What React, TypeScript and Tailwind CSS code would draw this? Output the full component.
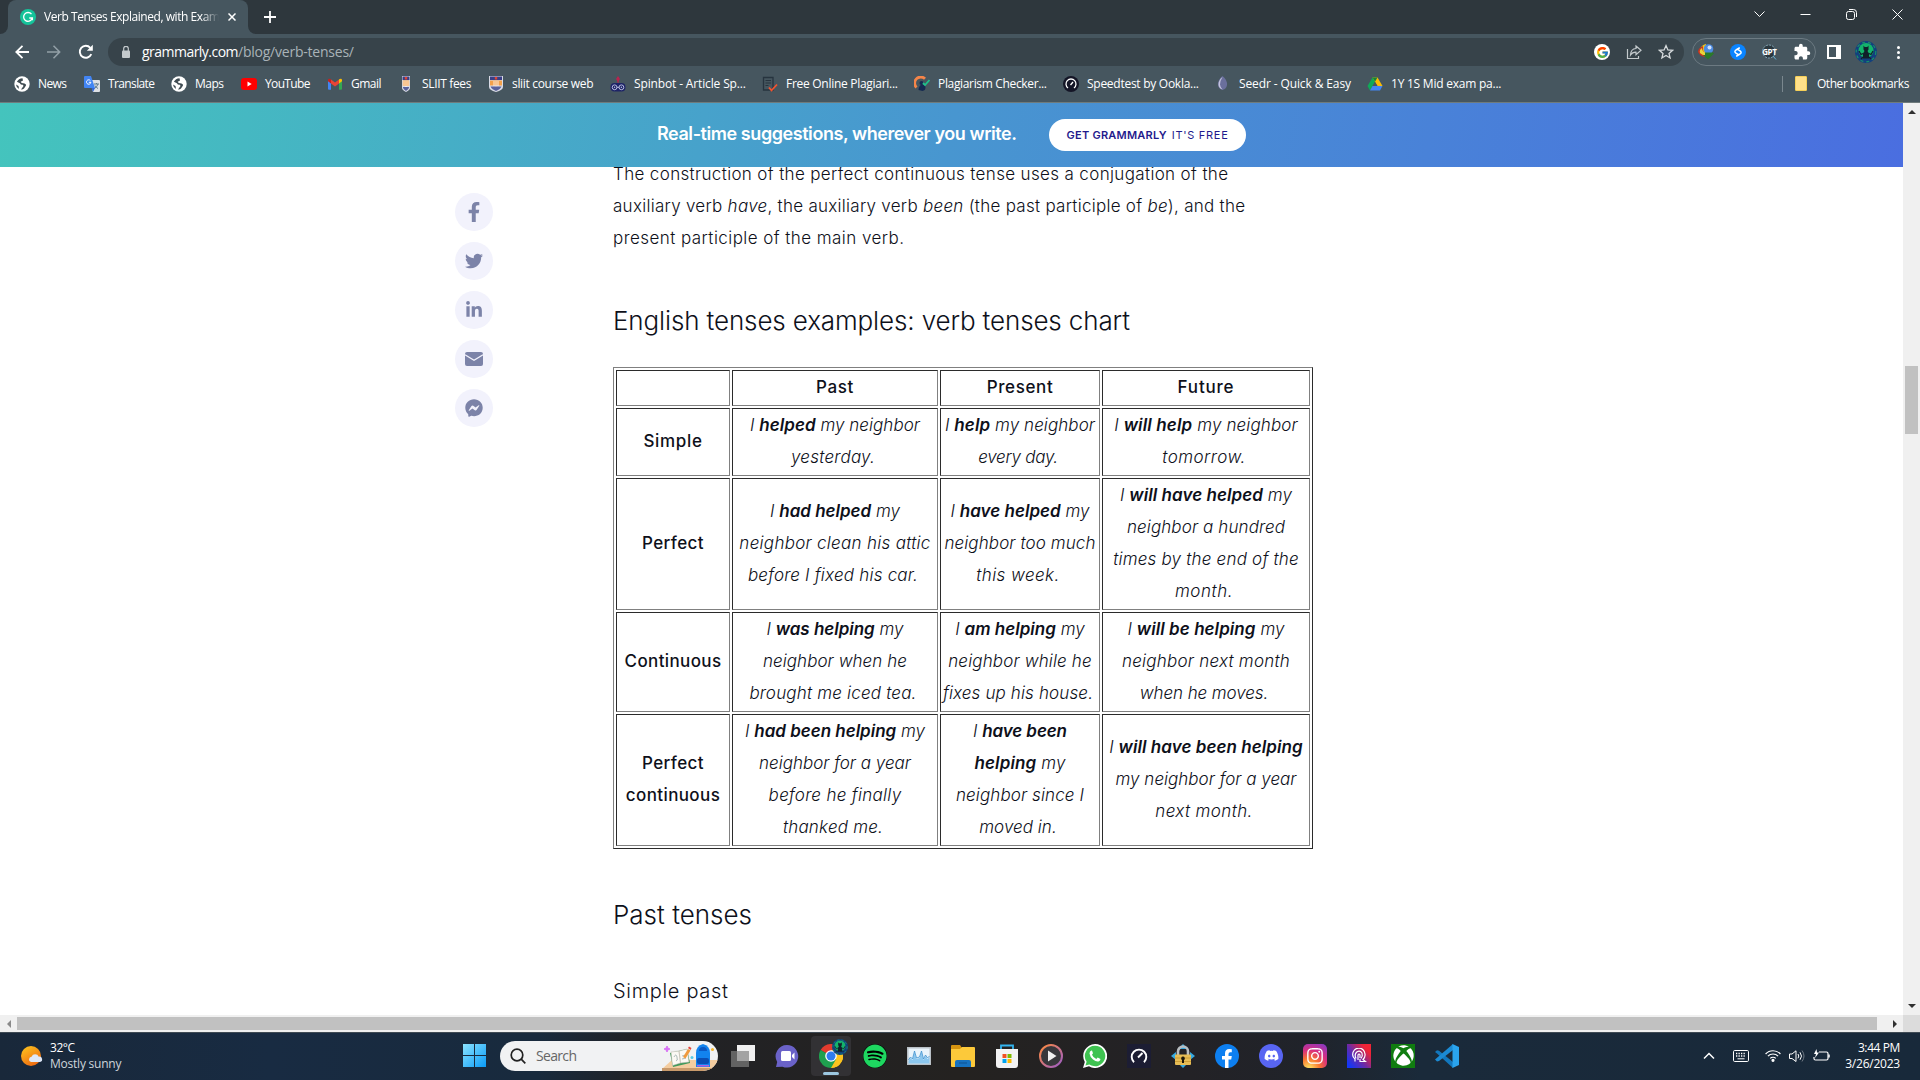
import React, { useLayoutEffect, useRef } from "react";
import { FaFacebookF, FaTwitter, FaLinkedinIn, FaFacebookMessenger, FaSpotify, FaDiscord, FaInstagram, FaXbox } from "react-icons/fa";
import { FcGoogle } from "react-icons/fc";
import { MdExtension } from "react-icons/md";

/** Single line of text, tracked so that it spans `w` pixels. */
function Fit({ w, className = "", children }: { w: number; className?: string; children: React.ReactNode }) {
  const ref = useRef<HTMLSpanElement>(null);
  useLayoutEffect(() => {
    const el = ref.current;
    if (!el) return;
    el.style.letterSpacing = "0px";
    const n = (el.textContent || "").length;
    const natural = el.getBoundingClientRect().width;
    if (n > 1) {
      const s = (w - natural) / (n - 1);
      el.style.letterSpacing = s.toFixed(3) + "px";
    }
  }, [w]);
  return <span ref={ref} className={"inline-block whitespace-pre " + className}>{children}</span>;
}

const ui = "font-['Open_Sans','Noto_Sans',sans-serif]";

/* ---------- small icons ---------- */

const Shield = ({ wide = false }: { wide?: boolean }) => (
  <svg width="16" height="16" viewBox="0 0 16 16">
    <path d={wide ? "M1 0h14v11q0 3-7 5q-7-2-7-5z" : "M4 0h8v12q0 2-4 4q-4-2-4-4z"} fill="#d9dbe6" />
    <path d={wide ? "M2 .5h12v3.500H2z" : "M4.500 .5h7v3.500h-7z"} fill="#3a3f86" />
    <path d="M6.800 1h2.400v2.500H6.800z" fill="#e0442f" />
    <path d={wide ? "M2 4.500h12v5H2z" : "M4.800 4.500h6.400v5.500H4.800z"} fill="#f3a14b" />
    <path d="M6 5v5M8 5v6M10 5v5" stroke="#fff" strokeWidth=".8" />
    <path d={wide ? "M2.500 10.500h11q-1 2.600-5.500 4.400q-4.500-1.800-5.500-4.400z" : "M4.800 11h6.400q-.3 2.500-3.200 4q-2.900-1.500-3.200-4z"} fill="#5a629b" />
  </svg>
);

const Globe = () => (
  <svg width="16" height="16" viewBox="0 0 16 16">
    <circle cx="8" cy="8" r="7.700" fill="#fff" />
    <path d="M8.500 2.200q-4 .3-5.600 3.600l3 1.400q1 2 3 1.500l.6 1.300-2.500 3.500q2 .2 3-1l2-3q.3-1.700-1.500-2l-2.800-.4-1-1.300 2.300-1.200z" fill="#3f4b52" />
    <path d="M2 8.500l2.500 1.500.5 3Q2.500 12 2 8.500z" fill="#3f4b52" />
  </svg>
);

const Translate = () => (
  <svg width="16" height="16" viewBox="0 0 16 16">
    <path d="M6 4h9q1 0 1 1v10q0 1-1 1H9z" fill="#dfe1e5" />
    <path d="M10 8h5M12.500 7v1M14 8q-1 3-3.500 4.500M11 9.500q1 2 3 3" stroke="#5f7a8c" fill="none" />
    <path d="M1 0h6l4 12H1q-1 0-1-1V1q0-1 1-1z" fill="#4285f4" />
    <path d="M7.500 12h3.500l-2 4z" fill="#3367d6" />
    <path d="M6.400 4.600a2.200 2.200 0 1 0 .5 1.700H4.800" stroke="#fff" strokeWidth="1" fill="none" />
  </svg>
);

const YouTube = () => (
  <svg width="16" height="16" viewBox="0 0 16 16">
    <rect x="0" y="2" width="16" height="12" rx="3" fill="#f00" />
    <path d="M6.500 5.500v5l4.200-2.500z" fill="#fff" />
  </svg>
);

const Gmail = () => (
  <svg width="16" height="16" viewBox="0 0 16 16">
    <path d="M1 4v9q0 .8 1 .8h2V7z" fill="#4285f4" />
    <path d="M15 4v9q0 .8-1 .8h-2V7z" fill="#34a853" />
    <path d="M4 3.500l4 3 4-3v4l-4 3-4-3z" fill="#ea4335" />
    <path d="M1 4q.3-2 2.300-1L4 3.500v4L1 5.300z" fill="#c5221f" />
    <path d="M15 4q-.3-2-2.300-1l-.7.5v4l3-2.200z" fill="#fbbc04" />
  </svg>
);

const Spinbot = () => (
  <svg width="16" height="16" viewBox="0 0 16 16" fill="none">
    <path d="M8 0l2 3-2 3-2-3z" fill="#b8234f" />
    <path d="M8 5v4" stroke="#b8234f" />
    <rect x=".5" y="7" width="15" height="8.500" rx="4" fill="#1e2467" />
    <circle cx="4.600" cy="11.300" r="2.400" stroke="#b9bde0" />
    <circle cx="11.400" cy="11.300" r="2.400" stroke="#b9bde0" />
    <circle cx="4.600" cy="11.300" r=".7" fill="#b9bde0" />
    <circle cx="11.400" cy="11.300" r=".7" fill="#b9bde0" />
    <path d="M6.800 11.300h2.400" stroke="#b9bde0" />
  </svg>
);

const DocCheck = () => (
  <svg width="16" height="16" viewBox="0 0 16 16" fill="none">
    <path d="M1.500 1.500h9.500v12.500h-9.500z" stroke="#27343f" strokeWidth="1.300" />
    <path d="M3.500 4.500h5.500M3.500 7h5.500M3.500 9.500h3" stroke="#27343f" />
    <path d="M7 11.500l2.500 3L15 8.500" stroke="#f4532f" strokeWidth="1.800" />
  </svg>
);

const PlagCheck = () => (
  <svg width="16" height="16" viewBox="0 0 16 16" fill="none">
    <path d="M11 2.700A5.500 5.500 0 0 0 2.500 11.500" stroke="#f58549" strokeWidth="2.800" />
    <path d="M4.500 14q0-4 3-5.500 4 0 4 3 0 3-3 3.500z" fill="#152a52" />
    <circle cx="7.500" cy="7" r="2" fill="#152a52" />
    <path d="M9 7l2 2 4.500-5" stroke="#1fc08b" strokeWidth="1.800" />
  </svg>
);

const Gauge = () => (
  <svg width="16" height="16" viewBox="0 0 16 16" fill="none">
    <circle cx="8" cy="8" r="8" fill="#141526" />
    <path d="M5 12A5 5 0 1 1 11 12" stroke="#fff" strokeWidth="1.300" />
    <path d="M7.500 9L10 6" stroke="#fff" strokeWidth="1.300" />
  </svg>
);

const Seedr = () => (
  <svg width="16" height="16" viewBox="0 0 16 16">
    <path d="M7.500 0Q12.500 4 12 9q-.5 4-4.500 5Q3.500 13 3 9 2.500 4 7.500 0z" fill="#6a6f9c" />
    <path d="M7.500 1Q5 5 5 8.500q.3 3 2.500 5Q3.500 12 3.500 8.500 3.500 4 7.500 1z" fill="#c3c3dd" />
  </svg>
);

const Drive = () => (
  <svg width="16" height="16" viewBox="0 0 16 16">
    <path d="M5.500 1.500h5L5.600 10 3 14.500.5 10z" fill="#0fa958" />
    <path d="M5.500 1.500h5L15.500 10h-5z" fill="#fbbc04" />
    <path d="M5.500 10h10L13 14.500H3z" fill="#4285f4" />
    <path d="M5.500 1.500h5L8 5.800z" fill="#188038" />
    <path d="M8 5.900l2.400 4.100H5.600z" fill="#46565f" />
  </svg>
);

const bookmarks: { icon: React.ReactNode; label: string; w: number; slot: string }[] = [
  { icon: <Globe />, label: "News", w: 29, slot: "w-[70px]" },
  { icon: <Translate />, label: "Translate", w: 47, slot: "w-[87px]" },
  { icon: <Globe />, label: "Maps", w: 29, slot: "w-[70px]" },
  { icon: <YouTube />, label: "YouTube", w: 45.500, slot: "w-[86px]" },
  { icon: <Gmail />, label: "Gmail", w: 30.500, slot: "w-[71px]" },
  { icon: <Shield />, label: "SLIIT fees", w: 49.500, slot: "w-[90px]" },
  { icon: <Shield wide />, label: "sliit course web", w: 81.500, slot: "w-[122px]" },
  { icon: <Spinbot />, label: "Spinbot - Article Sp...", w: 112, slot: "w-[152px]" },
  { icon: <DocCheck />, label: "Free Online Plagiari...", w: 112, slot: "w-[152px]" },
  { icon: <PlagCheck />, label: "Plagiarism Checker...", w: 109, slot: "w-[149px]" },
  { icon: <Gauge />, label: "Speedtest by Ookla...", w: 112, slot: "w-[152px]" },
  { icon: <Seedr />, label: "Seedr - Quick & Easy", w: 112, slot: "w-[152px]" },
  { icon: <Drive />, label: "1Y 1S Mid exam pa...", w: 110.500, slot: "w-[150px]" },
];

const Avatar = ({ size }: { size: number }) => (
  <svg width={size} height={size} viewBox="0 0 22 22">
    <circle cx="11" cy="11" r="11" fill="#12407e" />
    <circle cx="11" cy="9.500" r="7.500" fill="#14b36c" />
    <circle cx="11" cy="11" r="9.800" fill="none" stroke="#1a8f6a" strokeWidth="1.200" strokeDasharray="3 3" />
    <path d="M8.500 4.500l1.200 1.500h2.600l1.200-1.500v4l-1 1.500 1.500 2.500v5H8v-5l1.500-2.500-1-1.500z" fill="#10202a" />
    <path d="M4 10l2 3.500 2-1M18 10l-2 3.500-2-1M6 18l2-2M16 18l-2-2" stroke="#10202a" strokeWidth="1.200" fill="none" />
  </svg>
);

function Browser() {
  return (
    <header className={"text-white " + ui}>
      <div className="flex h-[34px] items-stretch bg-[#2e373d]">
        <div className="flex w-2 items-end bg-[#46565f]"><div className="h-[34px] w-2 rounded-br-lg bg-[#2e373d]" /></div>
        <div className="flex w-[240px] items-center rounded-t-lg bg-[#46565f] pl-3 pr-[10px]">
          <svg width="16" height="16" viewBox="0 0 16 16" fill="none">
            <circle cx="8" cy="8" r="8" fill="#15c39a" />
            <path d="M11.500 5.200A4.400 4.400 0 1 0 12.300 9H9.300M12.400 8.800v2.500" stroke="#fff" strokeWidth="1.300" />
          </svg>
          <div className="ml-2 w-[175px] overflow-hidden text-xs leading-4 [mask-image:linear-gradient(to_right,#000_90%,transparent)]">
            <Fit w={176}>Verb Tenses Explained, with Exam</Fit>
          </div>
          <svg className="ml-[9px]" width="8" height="8" viewBox="0 0 8 8" stroke="#fff" strokeWidth="1.500"><path d="M.5 .5l7 7M7.500 .5l-7 7" /></svg>
        </div>
        <div className="flex w-2 items-end bg-[#46565f]"><div className="h-[34px] w-2 rounded-bl-lg bg-[#2e373d]" /></div>
        <div className="flex flex-1 items-center justify-between pl-2">
          <svg width="12" height="12" viewBox="0 0 12 12" stroke="#fff" strokeWidth="1.800"><path d="M6 0v12M0 6h12" /></svg>
          <div className="mb-[6px] flex">
            {["M.5 2.500l5 5 5-5", "M.5 5.500h10", "M.5 4.500q0-2 2-2h4q2 0 2 2v4q0 2-2 2h-4q-2 0-2-2zM3 .5h4.500q3 0 3 3v4.500", "M.5 .5l10 10M10.500 .5l-10 10"].map((d) => (
              <span key={d} className="flex w-[46px] justify-center">
                <svg width="11" height="11" viewBox="0 0 11 11" fill="none" stroke="#fff" className="overflow-visible"><path d={d} /></svg>
              </span>
            ))}
          </div>
        </div>
      </div>
      <div className="flex h-9 items-center bg-[#46565f] pl-[6px]">
        <span className="flex w-8 justify-center">
          <svg width="14" height="14" viewBox="0 0 14 14" fill="none" stroke="#fff" strokeWidth="1.800"><path d="M14 7H1.500M7.500 .8L1.300 7l6.200 6.200" /></svg>
        </span>
        <span className="flex w-8 justify-center">
          <svg width="14" height="14" viewBox="0 0 14 14" fill="none" stroke="#93a0a7" strokeWidth="1.500"><path d="M0 7h12.500M6.500 .8L12.700 7l-6.200 6.200" /></svg>
        </span>
        <span className="flex w-8 justify-center">
          <svg width="16" height="16" viewBox="0 0 16 16" fill="none" stroke="#fff" strokeWidth="1.900"><path d="M13.300 10.200A6 6 0 1 1 12.300 3.800" /><path d="M14.800 .8v6H8.800z" fill="#fff" stroke="none" /></svg>
        </span>
        <div className="ml-[6px] flex h-7 w-[1576px] items-center rounded-full bg-[#37434a] pl-[14px] pr-[10px] text-sm leading-5">
          <svg width="8" height="12" viewBox="0 0 8 12"><rect y="4.500" width="8" height="7.500" rx="1" fill="#c3c9cc" /><path d="M1.700 5V2.600a2.300 2.300 0 0 1 4.600 0V5" stroke="#c3c9cc" strokeWidth="1.200" fill="none" /></svg>
          <span className="ml-3 flex">
            <Fit w={96.500}>grammarly.com</Fit>
            <Fit w={116} className="text-[#a9b3b8]">/blog/verb-tenses/</Fit>
          </span>
          <span className="ml-auto flex items-center gap-4">
            <span className="flex size-4 items-center justify-center rounded-full bg-white"><FcGoogle size={13} /></span>
            <svg width="16" height="16" viewBox="0 0 16 16" fill="none" stroke="#c3c9cc" strokeWidth="1.200"><path d="M1.500 5v9.500h11V12" /><path d="M10 2l5 4.300-5 4.300V8.200Q6.500 8 4.500 11 4.800 4.800 10 4.500z" /></svg>
            <svg width="16" height="16" viewBox="0 0 16 16" fill="none" stroke="#d6dadc" strokeWidth="1.300"><path d="M8 1.600l1.900 4.300 4.700.4-3.600 3.100 1.100 4.600L8 11.500 3.900 14 5 9.400 1.400 6.300l4.700-.4z" /></svg>
          </span>
        </div>
        <div className="ml-2 flex h-7 w-[124px] items-center justify-between rounded-full border border-[#6c7a82] pl-[5px] pr-1">
          <svg width="16" height="16" viewBox="0 0 16 16">
            <path d="M8 0Q3 1 2 6q1 3 6 3z" fill="#f2c417" />
            <path d="M5 2q-5 2-5 6 2 5 9 5l1-3q-6 0-5-8z" fill="#c9331f" />
            <path d="M4 4q-3 2-2 5 3 3 7 2l1-2q-6 0-6-5z" fill="#e9d63a" />
            <circle cx="10.500" cy="5" r="4.800" fill="#4d8be0" /><circle cx="11.500" cy="3.500" r="2" fill="#cfe2ff" />
            <path d="M7 8.500h8l1 1-6 6-5-4.500h2z" fill="#2a7a28" />
          </svg>
          <svg width="16" height="16" viewBox="0 0 16 16" fill="none"><circle cx="8" cy="8" r="8" fill="#0a84ff" /><path d="M9.300 4L6 6Q3.800 7.500 6 9.200L8 10.300M6.700 12L10 10q2.200-1.500 0-3.200L8 5.700" stroke="#fff" strokeWidth="1.500" strokeLinecap="round" /></svg>
          <span className="relative flex size-4 items-center justify-center">
            <svg width="16" height="16" viewBox="0 0 16 16" fill="none"><circle cx="8" cy="7.500" r="6.500" fill="#2a373f" stroke="#86a9b8" strokeDasharray="2 1" /><path d="M12 12l3 3.500" stroke="#5fb0d8" /></svg>
            <span className="absolute text-[8px] leading-none font-bold tracking-tighter">GPT</span>
          </span>
          <MdExtension size={18} />
        </div>
        <div className="ml-[11px] size-[14px] border-2 border-r-[5px] border-white" />
        <div className="ml-[14px]"><Avatar size={22} /></div>
        <div className="ml-5 flex flex-col gap-[2px]">
          <i className="size-[3px] rounded-full bg-white" /><i className="size-[3px] rounded-full bg-white" /><i className="size-[3px] rounded-full bg-white" />
        </div>
      </div>
      <div className="flex h-8 items-center bg-[#46565f] pb-[5px] pl-[14px] text-xs leading-4">
        {bookmarks.map((b) => (
          <div key={b.label} className={"flex items-center gap-2 " + b.slot}>
            {b.icon}
            <Fit w={b.w}>{b.label}</Fit>
          </div>
        ))}
        <div className="ml-auto flex items-center pr-[11px]">
          <i className="mr-3 h-4 w-px bg-[#7a878e]" />
          <i className="mr-[10px] h-[15px] w-3 rounded-[1px] border border-[#f5cf57] bg-[#ffe08a]" />
          <Fit w={92.500}>Other bookmarks</Fit>
        </div>
      </div>
      <div className="h-px bg-[#6f7b7c]" />
    </header>
  );
}

/* ---------- article ---------- */

type Line = [text: string, width: number, bold?: string];

/** `bold` is the phrase of the line set in a heavier weight. */
function CellLines({ lines }: { lines: Line[] }) {
  return (
    <>
      {lines.map(([t, w, bold], i) => {
        const at = bold ? t.indexOf(bold) : -1;
        return (
          <div key={t} className={i === lines.length - 1 ? "flex h-8 justify-center pr-1" : "flex h-8 justify-center"}>
            <Fit w={w}>
              {at < 0 ? t : <>{t.slice(0, at)}<b className="font-semibold">{bold}</b>{t.slice(at + bold!.length)}</>}
            </Fit>
          </div>
        );
      })}
    </>
  );
}

const rows: { head: [string, number][]; height: string; cells: Line[][] }[] = [
  {
    head: [["Simple", 58.500]], height: "h-[68px]",
    cells: [
      [["I helped my neighbor", 170, "helped"], ["yesterday.", 84]],
      [["I help my neighbor", 150, "help"], ["every day.", 80]],
      [["I will help my neighbor", 183.500, "will help"], ["tomorrow.", 83]],
    ],
  },
  {
    head: [["Perfect", 61.500]], height: "h-[132px]",
    cells: [
      [["I had helped my", 130, "had helped"], ["neighbor clean his attic", 191], ["before I fixed his car.", 170]],
      [["I have helped my", 139, "have helped"], ["neighbor too much", 151], ["this week.", 83]],
      [["I will have helped my", 172, "will have helped"], ["neighbor a hundred", 158], ["times by the end of the", 185.500], ["month.", 57.500]],
    ],
  },
  {
    head: [["Continuous", 96.500]], height: "h-[100px]",
    cells: [
      [["I was helping my", 137, "was helping"], ["neighbor when he", 144], ["brought me iced tea.", 167]],
      [["I am helping my", 129.500, "am helping"], ["neighbor while he", 143.500], ["fixes up his house.", 150]],
      [["I will be helping my", 157, "will be helping"], ["neighbor next month", 168], ["when he moves.", 128.500]],
    ],
  },
  {
    head: [["Perfect", 61.500], ["continuous", 94]], height: "h-[132px]",
    cells: [
      [["I had been helping my", 180, "had been helping"], ["neighbor for a year", 152], ["before he finally", 132.500], ["thanked me.", 100]],
      [["I have been", 94, "have been"], ["helping my", 91, "helping"], ["neighbor since I", 128], ["moved in.", 77.500]],
      [["I will have been helping", 193.500, "will have been helping"], ["my neighbor for a year", 181], ["next month.", 97]],
    ],
  },
];

/* One pixel more space below than above, so the text rides slightly high in its cell. */
const cell = "border border-t-[#2b2b2b] border-l-[#2b2b2b] border-r-[#808080] border-b-[#808080] p-0 pb-[2px] align-middle";

function Article() {
  return (
    <article className="ml-[120px] w-[700px] text-[17px] leading-8 font-light text-[#0e101a]">
      <div className="-mt-[9px]">
        <div className="h-8"><Fit w={615}>The construction of the perfect continuous tense uses a conjugation of the</Fit></div>
        <div className="h-8"><Fit w={632}>auxiliary verb <em>have</em>, the auxiliary verb <em>been</em> (the past participle of <em>be</em>), and the</Fit></div>
        <div className="h-8"><Fit w={291}>present participle of the main verb.</Fit></div>
      </div>
      <h2 className="mt-[47px] h-10 text-[26px] leading-10 font-[350]"><Fit w={517}>English tenses examples: verb tenses chart</Fit></h2>
      <table className="mt-[26px] w-[700px] table-fixed border-separate border-spacing-[2px] border border-t-[#808080] border-l-[#808080] border-r-[#2b2b2b] border-b-[#2b2b2b]">
        <colgroup>
          <col className="w-[114px]" /><col className="w-[206px]" /><col className="w-[160px]" /><col className="w-[208px]" />
        </colgroup>
        <tbody>
          <tr className="h-9 font-medium">
            <td className={cell} />
            {([["Past", 37.500], ["Present", 66], ["Future", 56]] as [string, number][]).map(([t, w]) => (
              <td key={t} className={cell + " text-center"}><div className="flex h-8 justify-center"><Fit w={w}>{t}</Fit></div></td>
            ))}
          </tr>
          {rows.map((r) => (
            <tr key={r.height + r.head[0][0] + r.head.length} className={r.height}>
              <td className={cell + " font-medium"}>
                {r.head.map(([t, w]) => <div key={t} className="flex h-8 justify-center"><Fit w={w}>{t}</Fit></div>)}
              </td>
              {r.cells.map((c) => <td key={c[0][0]} className={cell + " italic"}><CellLines lines={c} /></td>)}
            </tr>
          ))}
        </tbody>
      </table>
      <h2 className="mt-[46px] h-10 text-[26px] leading-10 font-[350]"><Fit w={139}>Past tenses</Fit></h2>
      <h3 className="mt-9 h-10 text-[20px] leading-10 font-[350]"><Fit w={115}>Simple past</Fit></h3>
    </article>
  );
}

const Mail = () => (
  <svg width="18" height="14" viewBox="0 0 18 14"><rect width="18" height="14" rx="2" fill="currentColor" /><path d="M0 2.800l9 5.400 9-5.400" stroke="#f2f2fc" strokeWidth="1.300" fill="none" /></svg>
);

function Page() {
  const share = [<FaFacebookF size={20} />, <FaTwitter size={18} />, <FaLinkedinIn size={18} />, <Mail />, <FaFacebookMessenger size={18} />];
  return (
    <div className="flex h-[912px] w-[1903px] flex-col overflow-hidden bg-white font-['Inter',sans-serif]">
      <div className="z-10 flex h-16 shrink-0 items-center bg-[linear-gradient(100deg,#44c4bd_0%,#4896d0_50%,#4a6ee0_100%)] pl-[657px]">
        <span className="mb-[2px] w-[392px] text-[18px] leading-6 font-semibold text-white"><Fit w={360}>Real-time suggestions, wherever you write.</Fit></span>
        <span className="flex h-8 w-[197px] items-center justify-center gap-[5px] rounded-full bg-white text-[11px] leading-4 text-[#1f1a8c]">
          <Fit w={100} className="font-semibold">GET GRAMMARLY</Fit>
          <Fit w={56}>IT'S FREE</Fit>
        </span>
      </div>
      <div className="flex">
        <aside className="ml-[455px] mt-[26px] flex w-[38px] shrink-0 flex-col gap-[11px] text-[#7c83a8]">
          {share.map((s, i) => <span key={i} className="flex size-[38px] items-center justify-center rounded-full bg-[#f2f2fc]">{s}</span>)}
        </aside>
        <Article />
      </div>
    </div>
  );
}

/* ---------- taskbar ---------- */

const Tile = ({ className = "", children }: { className?: string; children: React.ReactNode }) => (
  <span className={"flex size-6 items-center justify-center " + className}>{children}</span>
);

const Chrome = () => (
  <span className="relative flex size-10 items-center justify-center rounded bg-[#323134]">
    <svg width="24" height="24" viewBox="0 0 24 24">
      <path d="M12 12L1.600 6A12 12 0 0 1 22.400 6z" fill="#e33b2e" />
      <path d="M12 12L22.400 6A12 12 0 0 1 12 24z" fill="#fcc31e" />
      <path d="M12 12V24A12 12 0 0 1 1.600 6z" fill="#1fa04f" />
      <path d="M12 6h10.400A12 12 0 0 1 12 24l5.200-9z" fill="#fcc31e" />
      <path d="M1.600 6l5.200 9L12 24l5.200-9H12z" fill="#1fa04f" />
      <circle cx="12" cy="12" r="5.800" fill="#fff" /><circle cx="12" cy="12" r="4.500" fill="#2f7cf0" />
    </svg>
    <span className="absolute top-[3px] right-[3px]"><Avatar size={16} /></span>
    <i className="absolute bottom-px left-3 h-[3px] w-4 rounded-full bg-[#9cc7e0]" />
  </span>
);

const taskIcons: React.ReactNode[] = [
  <svg width="24" height="24" viewBox="0 0 24 24"><rect x="6" y="1" width="18" height="16" fill="#f0f0f0" /><rect x="0" y="7" width="18" height="16" fill="#6e6e6e" opacity=".85" /><rect x="6" y="7" width="12" height="10" fill="#a3a3a3" /></svg>,
  <svg width="24" height="24" viewBox="0 0 24 24"><path d="M12 1a11.300 11.300 0 1 1-4.500 21.700L1 23l1.200-5A11.300 11.300 0 0 1 12 1z" fill="#6a62c8" /><rect x="6" y="7" width="10" height="10" rx="1.500" fill="#fff" /><path d="M17 11l2.500-2.500v7L17 13z" fill="#fff" /></svg>,
  <Chrome />,
  <Tile className="rounded-full bg-black text-[#1ed760]"><FaSpotify size={24} /></Tile>,
  <svg width="24" height="18" viewBox="0 0 24 18"><rect width="24" height="18" fill="#b9c0c6" /><rect x="1.500" y="1.500" width="21" height="15" fill="#eaf4fb" /><path d="M1.500 14l2-3 2 2 2-8 2 7 3-1 2-6 2 8 2-4 2 3 2-2v6.500h-21z" fill="#8cc7ee" /><path d="M1.500 13l2-3 2 2 2-8 2 7 3-1 2-6 2 8 2-4 2 3 2-2" fill="none" stroke="#3b8fce" strokeWidth=".8" /></svg>,
  <svg width="24" height="24" viewBox="0 0 24 24"><path d="M0 2q0-1 1-1h8l2 3-2 3H0z" fill="#d69410" /><path d="M0 5h9l2-2h12q1 0 1 1v18q0 1-1 1H1q-1 0-1-1z" fill="#fcc93a" /><path d="M4 23v-5q0-2 2-2h12q2 0 2 2v5z" fill="#1672c0" /><path d="M8 19h8" stroke="#0f5391" /></svg>,
  <svg width="24" height="24" viewBox="0 0 24 24"><path d="M6 5V1.500h12V5" fill="none" stroke="#33b4ef" strokeWidth="1.800" /><path d="M1 5h22v16q0 3-3 3H4q-3 0-3-3z" fill="#f3f3f3" /><path d="M7.500 10h4v4h-4z" fill="#f25022" /><path d="M12.500 10h4v4h-4z" fill="#7fba00" /><path d="M7.500 15h4v4h-4z" fill="#00a4ef" /><path d="M12.500 15h4v4h-4z" fill="#ffb900" /></svg>,
  <svg width="24" height="24" viewBox="0 0 24 24"><defs><linearGradient id="mp" x2="1" y2="1"><stop stopColor="#ff8a3c" /><stop offset="1" stopColor="#9a5cc9" /></linearGradient></defs><circle cx="12" cy="12" r="11" fill="#37373b" stroke="url(#mp)" strokeWidth="2" /><path d="M9 6.500v11l8.500-5.500z" fill="#f0f0f0" /></svg>,
  <svg width="24" height="24" viewBox="0 0 24 24"><path d="M12 0a12 12 0 1 1-6 22.300L0 24l1.800-6A12 12 0 0 1 12 0z" fill="#fff" /><path d="M12 1.800A10.200 10.200 0 1 1 6.300 20.400L2.500 21.500l1.100-3.800A10.200 10.200 0 0 1 12 1.800z" fill="#3fc351" /><path d="M8.500 6.500q-2 .7-2 3Q7 13 10 15.500q3 2.500 5.500 2 2-.7 2-2.500L14.700 13.500 13.300 15q-3-1-4.300-4.200L10 9.300 9 6.500z" fill="#fff" /></svg>,
  <svg width="24" height="24" viewBox="0 0 24 24" fill="none"><rect width="24" height="24" fill="#1c1d33" /><path d="M7 18.200A7.300 7.300 0 1 1 17 18.200" stroke="#fff" strokeWidth="1.900" /><path d="M11 13.500l4.500-4.500" stroke="#fff" strokeWidth="1.900" /></svg>,
  <svg width="24" height="24" viewBox="0 0 24 24"><path d="M12 0l5 5H7zM0 12l5-4v8zM24 12l-5-4v8zM12 24l-3-3h6z" fill="#36a9e0" /><path d="M7 11V7.500a5 5 0 0 1 10 0V11" fill="none" stroke="#b9bec2" strokeWidth="2.600" /><rect x="4" y="10.500" width="16" height="10.500" rx="1" fill="#e7bd55" /><path d="M4 14h16M4 17.500h16" stroke="#c7962f" strokeWidth=".8" /><path d="M12 12.500a1.900 1.900 0 0 1 1 3.500v3h-2v-3a1.900 1.900 0 0 1 1-3.500z" fill="#1d1708" /></svg>,
  <svg width="24" height="24" viewBox="0 0 24 24"><circle cx="12" cy="12" r="12" fill="#0d7ff0" /><path d="M10 24v-8.500H7V12h3V9.500Q10 5 14.300 5q1.500 0 2.500.2v3h-1.600q-1.700 0-1.700 1.700V12h3.300l-.6 3.500h-2.700V24z" fill="#fff" /></svg>,
  <Tile className="rounded-full bg-[#5865f2] text-white"><FaDiscord size={15} /></Tile>,
  <Tile className="rounded-[5px] bg-[radial-gradient(circle_at_25%_105%,#fdd45c_8%,#f9762f_35%,#d92f7f_62%,#7a3bd0_100%)] text-white"><FaInstagram size={18} /></Tile>,
  <Tile className="bg-[linear-gradient(50deg,#1536f5_10%,#6a2aa8_45%,#f02436_80%)]"><svg width="16" height="16" viewBox="0 0 16 16" fill="none" stroke="#fff" strokeWidth="1.200"><path d="M4 13.500V11Q1.500 9 1.700 6.500A6 6 0 0 1 14 6q.5 3-2 5.500l2.500 2H9V11" /><path d="M5 10.500q-2-4 .8-6.500Q9 2 11 5q1 3-1 5.500" /><path d="M7 12V7q1-2 2 0v3" /></svg></Tile>,
  <Tile className="bg-[#107c10] text-white"><FaXbox size={21} /></Tile>,
  <svg width="24" height="24" viewBox="0 0 24 24"><path d="M18 0v24L2 9.500 0 8l2-1.700 2 .5L18 18z" fill="#1277bd" /><path d="M18 0L0 15.500 2 17.500l2-.5L18 6z" fill="#1b8ad3" /><path d="M17.500 0L24 3v18l-6.500 3z" fill="#2aa4ee" /></svg>,
];

function Taskbar() {
  return (
    <footer className={"flex h-12 items-center border-t border-[#3f4a54] bg-[linear-gradient(90deg,#19283a_0%,#182b42_14%,#182a3d_28%,#212226_33%,#242220_50%,#232226_62%,#20232a_68%,#1a2a3a_74%,#18293a_100%)] pb-[2px] text-white text-xs leading-4 " + ui}>
      <svg className="ml-[21px]" width="22" height="20" viewBox="0 0 22 20">
        <defs><linearGradient id="sun" x2=".6" y2="1"><stop stopColor="#ffc91f" /><stop offset="1" stopColor="#ee6c12" /></linearGradient></defs>
        <circle cx="10" cy="10" r="10" fill="url(#sun)" />
        <path d="M10 16a2.700 2.700 0 0 1 .5-5.300 4 4 0 0 1 7.300 0A2.700 2.700 0 0 1 19 16z" fill="#dfe8f8" />
      </svg>
      <div className="ml-[7px] flex w-[412px] flex-col items-start">
        <Fit w={25}>32°C</Fit>
        <Fit w={71.500} className="text-[#cfd5db]">Mostly sunny</Fit>
      </div>
      <svg className="ml-px" width="23" height="23" viewBox="0 0 23 23">
        <defs><linearGradient id="win" x2="1" y2="1"><stop stopColor="#8ae3ff" /><stop offset="1" stopColor="#0a9bf7" /></linearGradient></defs>
        <path d="M0 0h11v11H0zM12 0h11v11H12zM0 12h11v11H0zM12 12h11v11H12z" fill="url(#win)" />
      </svg>
      <div className="ml-[14px] flex h-[30px] w-[218px] items-center overflow-hidden rounded-full bg-[#f1f2f3] pl-[10px] text-[14px] text-[#666]">
        <svg width="16" height="16" viewBox="0 0 16 16" fill="none" stroke="#222" strokeWidth="1.700"><circle cx="7" cy="7" r="5.800" /><path d="M11.200 11.200L15.300 15.300" /></svg>
        <span className="ml-[10px]"><Fit w={41}>Search</Fit></span>
        <svg className="ml-auto" width="56" height="30" viewBox="0 0 56 30">
          <path d="M10 19h46v9H0z" fill="#f4cda0" /><path d="M0 27h56v3H0z" fill="#c99a6b" />
          <path d="M8 12l17-4 3 14-17 4z" fill="#3f9a5b" /><path d="M9 11l8-1 1.500 12-8 2.500zM17 10l8-2 2 13-8.500 1z" fill="#fbf9f4" stroke="#b9b4a8" strokeWidth=".5" />
          <path d="M12 16q2-4 3 0t-1 4M20 15l4-1M20 18l4-1" stroke="#9aa" fill="none" strokeWidth=".8" />
          <path d="M21 16l5-8 2.500 1.500-5 8z" fill="#f09a3c" /><path d="M26 7l1-1.500 2.500 1.500-1 2z" fill="#e4473c" />
          <path d="M34 26V12Q34 5 41 3q7 2 7 9v14z" fill="#1283ee" /><path d="M37 10q0-4 4-4t4 4z" fill="#0a58c4" /><rect x="35" y="17" width="12" height="6" rx="2" fill="#0b4fb4" /><path d="M35 24h12v1.500H35z" fill="#b35fe0" />
          <path d="M5 5l.9 2.100L8 8l-2.100.9L5 11l-.9-2.100L2 8l2.100-.9z" fill="#d974f5" stroke="#d974f5" /><circle cx="50.500" cy="8.500" r="1.500" fill="#f6b62c" /><circle cx="30" cy="16.500" r="1.500" fill="#56cbe8" />
        </svg>
      </div>
      <div className="ml-[3px] flex">
        {taskIcons.map((ic, i) => <span key={i} className="flex w-11 items-center justify-center">{ic}</span>)}
      </div>
      <div className="ml-auto flex items-center pr-5">
        <svg className="mr-[18px]" width="12" height="8" viewBox="0 0 12 8" fill="none" stroke="#fff" strokeWidth="1.500"><path d="M1 6.500l5-5 5 5" /></svg>
        <svg className="mr-4" width="16" height="12" viewBox="0 0 16 12" fill="none" stroke="#fff"><rect x=".5" y=".5" width="15" height="11" rx="1.200" /><path d="M3 3.500h10M3 6h10" strokeDasharray="1.300 1.200" strokeWidth="1.300" /><path d="M4.500 8.800h7" /></svg>
        <svg className="mr-2" width="16" height="13" viewBox="0 0 16 13" fill="none" stroke="#fff" strokeWidth="1.200"><path d="M.6 5A10 10 0 0 1 15.400 5M2.900 7.200a7 7 0 0 1 10.200 0M5.200 9.400a4 4 0 0 1 5.600 0" /><circle cx="8" cy="11.300" r="1" fill="#fff" /></svg>
        <svg className="mr-2" width="16" height="14" viewBox="0 0 16 14" fill="none" stroke="#fff"><path d="M.5 5v4.500H3l4 3V1.800L3 5z" /><path d="M9 5q1.500 2 0 4.300M11 3.300q3 4 0 7.500" /><path d="M13 1.500q4 5.500 0 11" stroke="#6e7882" /></svg>
        <svg className="mr-[14px]" width="17" height="13" viewBox="0 0 17 13" fill="none" stroke="#fff"><path d="M6 3h7.500q1.500 0 1.500 1.500v5q0 1.500-1.500 1.500h-11q-1.500 0-1.500-1.500V8" strokeWidth="1.200" /><path d="M16 5.500v3" strokeWidth="1.500" /><path d="M3.500 0L1 5h2L2 9l4-5.500H4z" fill="#fff" stroke="none" /></svg>
        <div className="flex w-[56px] flex-col items-end">
          <Fit w={42.500}>3:44 PM</Fit>
          <Fit w={55}>3/26/2023</Fit>
        </div>
      </div>
    </footer>
  );
}

const Tri = ({ d, fill }: { d: string; fill: string }) => <svg width="8" height="8" viewBox="0 0 8 8"><path d={d} fill={fill} /></svg>;

export default function App() {
  return (
    <div className="flex h-[1080px] w-[1920px] flex-col overflow-hidden">
      <Browser />
      <div className="flex h-[929px] flex-col">
        <div className="flex h-[912px]">
          <Page />
          <div className="flex w-[17px] flex-col items-center bg-[#f0f0f0] py-[5px]">
            <Tri d="M0 6h8L4 2z" fill="#303030" />
            <i className="mt-[250px] mb-auto h-[68px] w-[13px] bg-[#c1c1c1]" />
            <Tri d="M0 2h8L4 6z" fill="#303030" />
          </div>
        </div>
        <div className="flex h-[17px] items-center bg-[#f0f0f0]">
          <span className="flex w-[17px] justify-center"><Tri d="M6 0v8L2 4z" fill="#8a8a8a" /></span>
          <i className="h-[13px] w-[1860px] bg-[#c1c1c1]" />
          <span className="ml-[9px] flex w-[17px] justify-center"><Tri d="M2 0v8l4-4z" fill="#303030" /></span>
          <i className="h-[17px] w-[17px] bg-[#dcdcdc]" />
        </div>
      </div>
      <Taskbar />
    </div>
  );
}
